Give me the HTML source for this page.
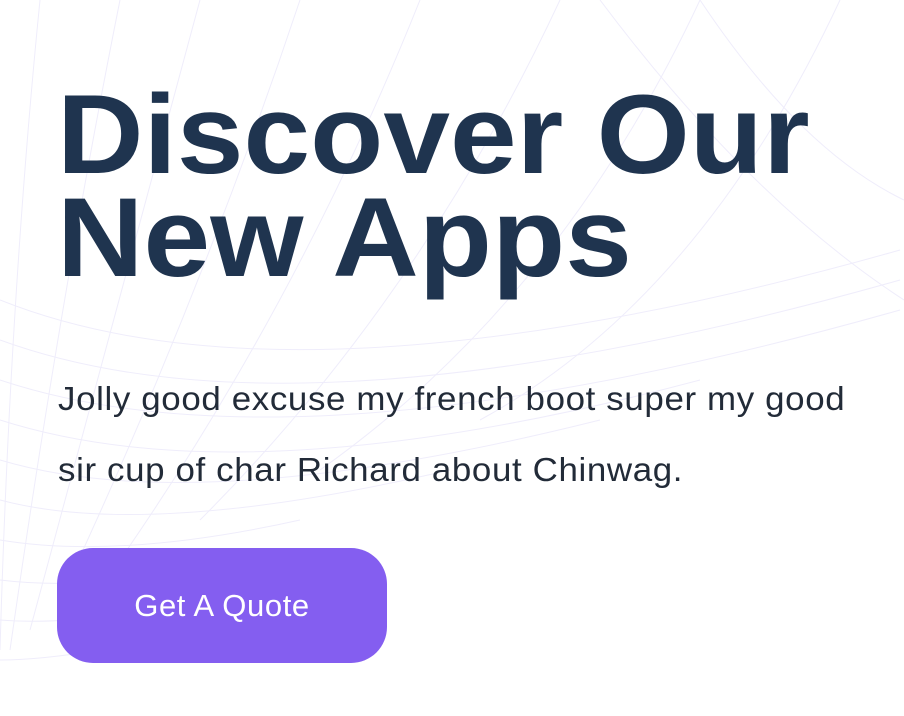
<!DOCTYPE html>
<html><head><meta charset="utf-8"><style>
html,body{margin:0;padding:0;width:904px;height:716px;overflow:hidden;background:#fff;font-family:"Liberation Sans",sans-serif;}
svg.bg{position:absolute;left:0;top:0}
h1{position:absolute;left:57px;top:83px;margin:0;font-size:112px;line-height:103px;font-weight:700;color:#1f344f;letter-spacing:0;white-space:nowrap;transform:scaleX(1.07);transform-origin:0 0}
p{position:absolute;left:58px;top:363px;margin:0;font-size:33px;line-height:71px;color:#222b38;letter-spacing:0.6px;white-space:nowrap;transform:scaleX(1.057);transform-origin:0 0}
.btn{position:absolute;left:57px;top:548px;width:330px;height:115px;border-radius:36px;background:#845ef0;color:#fff;font-size:31px;line-height:115px;text-align:center;letter-spacing:0.6px}
</style></head><body>
<svg class="bg" width="904" height="716" viewBox="0 0 904 716">
<g fill="none" stroke="#efedfb" stroke-width="1">
<path d="M0 300 Q300 420 900 250"/><path d="M0 340 Q300 450 900 280"/><path d="M0 380 Q300 480 900 310"/>
<path d="M0 420 Q250 500 700 380"/><path d="M0 460 Q200 520 600 420"/><path d="M0 500 Q150 540 450 470"/>
<path d="M0 540 Q120 560 300 520"/><path d="M0 580 Q80 590 200 570"/><path d="M0 620 Q60 625 150 610"/>
<path d="M0 660 Q40 660 100 650"/>
<path d="M40 0 Q10 300 0 650"/><path d="M120 0 Q60 300 10 650"/><path d="M200 0 Q120 300 30 630"/>
<path d="M300 0 Q200 300 60 600"/><path d="M420 0 Q300 300 120 560"/><path d="M560 0 Q420 300 200 520"/>
<path d="M700 0 Q560 300 320 470"/><path d="M840 0 Q700 300 480 420"/>
<path d="M600 0 Q750 200 904 300"/><path d="M700 0 Q800 150 904 200"/>
</g></svg>
<h1>Discover Our<br>New Apps</h1>
<p>Jolly good excuse my french boot super my good<br>sir cup of char Richard about Chinwag.</p>
<div class="btn">Get A Quote</div>
</body></html>
